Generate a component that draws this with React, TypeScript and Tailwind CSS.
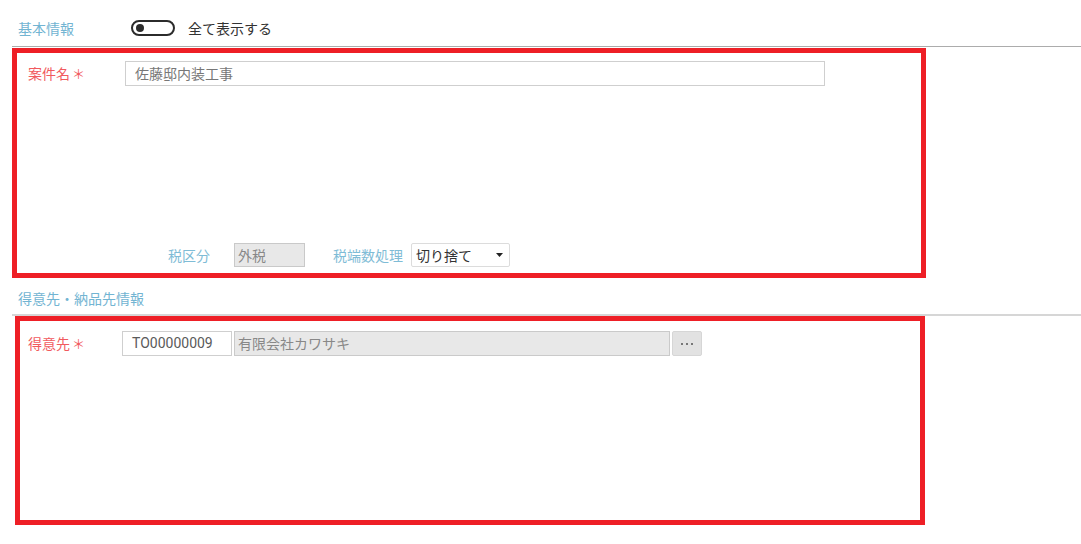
export default function App() {
  return (
    <div className="w-[1081px] h-[544px] bg-white font-['Noto_Sans_CJK_JP',sans-serif] text-[14px] overflow-hidden">
      {/* Section 1 header */}
      <div className="ml-[12px] h-[47px] pt-[10px] border-b border-[#acacac] flex items-center pl-[6px]">
        <span className="w-[113px] text-[#72b4d2]">基本情報</span>
        <span className="w-[44px] h-[16px] rounded-full border-2 border-[#2b2b2b] flex items-center pl-[3px]">
          <span className="w-[8px] h-[8px] rounded-full bg-[#2b2b2b]" />
        </span>
        <span className="ml-[13px] text-[#333]">全て表示する</span>
      </div>

      {/* Box 1 */}
      <div className="ml-[12px] mt-[1px] w-[914px] h-[230px] border-[5px] border-[#ee1f26] flex flex-col justify-between pt-[8px] pb-[6px]">
        <div className="flex items-center pl-[11px]">
          <span className="w-[97px] text-[#f15a5e]">
            案件名<span className="ml-[2px] text-[13px]">＊</span>
          </span>
          <div className="w-[700px] h-[25px] border border-[#cfcfcf] flex items-center pl-[9px] text-[#777]">
            佐藤邸内装工事
          </div>
        </div>
        <div className="flex items-center pl-[151px]">
          <span className="text-[#7fbcd6]">税区分</span>
          <div className="ml-[24px] w-[71px] h-[24px] bg-[#e8e8e8] border border-[#c9c9c9] flex items-center pl-[3px] text-[#888]">
            外税
          </div>
          <span className="ml-[28px] text-[#7fbcd6]">税端数処理</span>
          <div className="ml-[8px] w-[99px] h-[24px] bg-white border border-[#dcdcdc] rounded-[2px] flex items-center justify-between pl-[4px] pr-[6px] text-[#333]">
            切り捨て
            <svg width="7" height="4" viewBox="0 0 7 4">
              <path d="M0 0h7L3.5 4z" fill="#222" />
            </svg>
          </div>
        </div>
      </div>

      {/* Section 2 header */}
      <div className="ml-[12px] h-[38px] pt-[4px] border-b-2 border-[#d6d6d6] flex items-center pl-[6px]">
        <span className="text-[#72b4d2]">得意先・納品先情報</span>
      </div>

      {/* Box 2 */}
      <div className="ml-[15px] w-[910px] h-[209px] border-[5px] border-[#ee1f26] pt-[10px] pl-[8px]">
        <div className="flex items-center">
          <span className="w-[94px] text-[#f15a5e]">
            得意先<span className="ml-[2px] text-[13px]">＊</span>
          </span>
          <div className="w-[110px] h-[25px] border border-[#cfcfcf] flex items-center pl-[9px] text-[#5a5a5a] font-['Roboto',sans-serif]">
            TO00000009
          </div>
          <div className="ml-[2px] w-[436px] h-[25px] bg-[#e8e8e8] border border-[#cacaca] flex items-center pl-[3px] text-[#888]">
            有限会社カワサキ
          </div>
          <div className="ml-[2px] w-[30px] h-[25px] bg-[#e2e2e2] border border-[#d6d6d6] rounded-[2px] flex items-center justify-center gap-[3px]">
            <span className="w-[2px] h-[2px] bg-[#777]" />
            <span className="w-[2px] h-[2px] bg-[#777]" />
            <span className="w-[2px] h-[2px] bg-[#777]" />
          </div>
        </div>
      </div>
    </div>
  )
}
